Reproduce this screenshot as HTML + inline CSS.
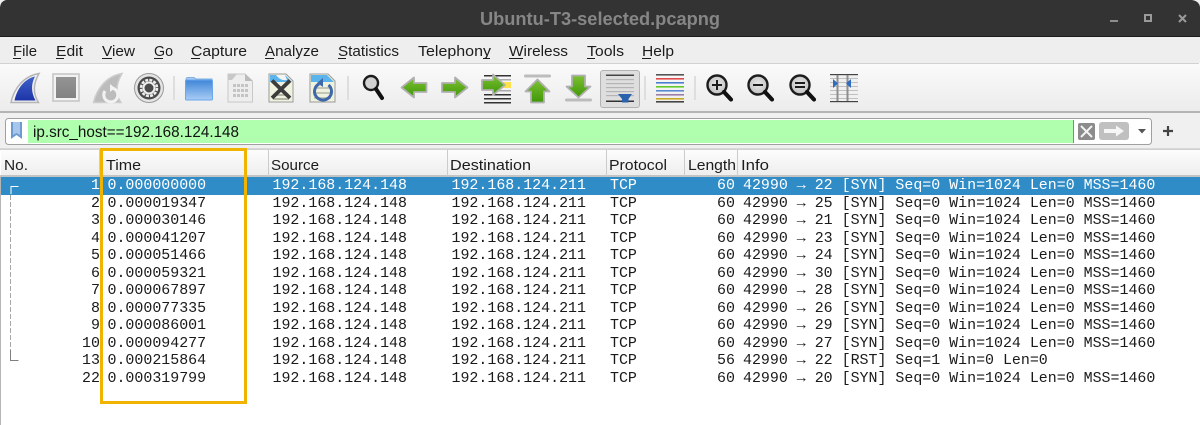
<!DOCTYPE html>
<html><head><meta charset="utf-8"><title>Ubuntu-T3-selected.pcapng</title>
<style>
html,body{margin:0;padding:0;width:1200px;height:425px;overflow:hidden;background:#fff}
svg{display:block}
.ui{font-family:"Liberation Sans",sans-serif;font-size:15px;fill:#1c1c1c}
.m{font-family:"Liberation Mono",monospace;font-size:14.95px;fill:#1a1a1a;white-space:pre}
.w{fill:#fff}
</style></head><body>
<svg width="1200" height="425" viewBox="0 0 1200 425" xmlns="http://www.w3.org/2000/svg">
<defs>
<linearGradient id="tb" x1="0" y1="0" x2="0" y2="1"><stop offset="0" stop-color="#fafafa"/><stop offset="1" stop-color="#ececec"/></linearGradient>
<linearGradient id="hd" x1="0" y1="0" x2="0" y2="1"><stop offset="0" stop-color="#fdfdfd"/><stop offset="1" stop-color="#ededed"/></linearGradient>
<linearGradient id="fin" x1="0" y1="0" x2="0" y2="1"><stop offset="0" stop-color="#3f62c8"/><stop offset="1" stop-color="#1e34a8"/></linearGradient>
<linearGradient id="gr" x1="0" y1="0" x2="0" y2="1"><stop offset="0" stop-color="#7cc232"/><stop offset="1" stop-color="#3f9608"/></linearGradient>
<linearGradient id="fo" x1="0" y1="0" x2="0" y2="1"><stop offset="0" stop-color="#3f86d8"/><stop offset="1" stop-color="#a9cdf5"/></linearGradient>
<linearGradient id="st" x1="0" y1="0" x2="0" y2="1"><stop offset="0" stop-color="#949494"/><stop offset="1" stop-color="#828282"/></linearGradient>
<radialGradient id="gl" cx=".5" cy=".45" r=".6"><stop offset="0" stop-color="#e8e8e8"/><stop offset="1" stop-color="#bcbcbc"/></radialGradient>
</defs>

<!-- title bar -->
<rect width="1200" height="425" fill="#fff"/>
<rect x="0" y="0" width="1200" height="36" fill="#333"/>
<path d="M0 0H6Q1 1 0 7Z M1200 0H1192Q1199 1 1200 7Z" fill="#f0f0f0"/>
<rect x="0" y="36" width="1200" height="1" fill="#1c1c1c"/>
<text x="480" y="25" font-family="'Liberation Sans',sans-serif" font-size="18.500" font-weight="700" fill="#868686" textLength="240" lengthAdjust="spacingAndGlyphs">Ubuntu-T3-selected.pcapng</text>
<rect x="1110" y="20" width="8" height="2" fill="#8e8e8e"/>
<rect x="1145" y="15" width="6" height="6" fill="none" stroke="#9a9a9a" stroke-width="2"/>
<path d="M1179 15L1186 22M1186 15L1179 22" stroke="#9a9a9a" stroke-width="2"/>

<!-- menu -->
<rect x="0" y="37" width="1200" height="26" fill="#eeeeee"/>
<rect x="0" y="63" width="1199" height="1" fill="#d2d2d2"/>
<g class="ui">
<text x="13" y="56" textLength="24" lengthAdjust="spacingAndGlyphs">File</text>
<text x="56" y="56" textLength="27" lengthAdjust="spacingAndGlyphs">Edit</text>
<text x="102" y="56" textLength="33" lengthAdjust="spacingAndGlyphs">View</text>
<text x="154" y="56" textLength="19" lengthAdjust="spacingAndGlyphs">Go</text>
<text x="191" y="56" textLength="56" lengthAdjust="spacingAndGlyphs">Capture</text>
<text x="265" y="56" textLength="54" lengthAdjust="spacingAndGlyphs">Analyze</text>
<text x="338" y="56" textLength="61" lengthAdjust="spacingAndGlyphs">Statistics</text>
<text x="418" y="56" textLength="73" lengthAdjust="spacingAndGlyphs">Telephony</text>
<text x="509" y="56" textLength="59" lengthAdjust="spacingAndGlyphs">Wireless</text>
<text x="587" y="56" textLength="37" lengthAdjust="spacingAndGlyphs">Tools</text>
<text x="642" y="56" textLength="32" lengthAdjust="spacingAndGlyphs">Help</text>
</g>
<g fill="#1c1c1c">
<rect x="13" y="58" width="8" height="1"/><rect x="56" y="58" width="8" height="1"/><rect x="102" y="58" width="10" height="1"/><rect x="154" y="58" width="9" height="1"/><rect x="191" y="58" width="9" height="1"/><rect x="265" y="58" width="9" height="1"/><rect x="338" y="58" width="8" height="1"/><rect x="483" y="58" width="7" height="1"/><rect x="509" y="58" width="14" height="1"/><rect x="587" y="58" width="8" height="1"/><rect x="642" y="58" width="9" height="1"/>
</g>

<!-- toolbar -->
<rect x="0" y="64" width="1200" height="47" fill="url(#tb)"/>
<rect x="0" y="111" width="1200" height="2" fill="#b4b4b4"/>

<!-- shark fin -->
<path d="M39 73.500C24 76 14 88 11 102.500H38.500C33 94 33 84 39 73.500Z" fill="#f2f2f2" stroke="#b5b5b5" stroke-width="1.500"/>
<path d="M35 76.500C24 79 17 89 14.500 100.500H35.500C31 92 31 84 35 76.500Z" fill="url(#fin)"/>
<!-- stop -->
<rect x="53" y="74" width="26" height="27" fill="#f2f2f2" stroke="#c4c4c4" stroke-width="1.500"/>
<rect x="56" y="77" width="20" height="21" fill="url(#st)"/>
<!-- restart -->
<path d="M122 73.500C107 76 97 88 93.500 102.500H121C115 94 116 84 122 73.500Z" fill="#bcbcbc" stroke="#cdcdcd" stroke-width="1.500"/>
<path d="M105 91a7 7 0 1 0 7-3" fill="none" stroke="#f2f2f2" stroke-width="3"/>
<path d="M110 84l5 4-5 4z" fill="#f2f2f2"/>
<!-- gear -->
<circle cx="149" cy="88" r="14.500" fill="#e4e4e4" stroke="#9a9a9a" stroke-width="1"/>
<circle cx="149" cy="88" r="11.500" fill="#4a4a4a"/>
<circle cx="149" cy="88" r="8" fill="none" stroke="#eee" stroke-width="2.500" stroke-dasharray="3 1.200"/>
<circle cx="149" cy="88" r="5.500" fill="none" stroke="#eee" stroke-width="2"/>
<circle cx="149" cy="88" r="3.500" fill="#4a4a4a"/>
<!-- sep -->
<rect x="173" y="76" width="2" height="24" fill="#dedede"/>
<!-- folder -->
<path d="M186 79l1-1.500h7l2 1.500h16v3h-26z" fill="#a8cbee" stroke="#7fb0e4" stroke-width="1"/>
<rect x="185.500" y="80" width="27" height="20" rx="1" fill="url(#fo)" stroke="#6aa6ea" stroke-width="1"/>
<!-- file -->
<path d="M228 74H245L252.500 81V102H228Z" fill="#eeeeee" stroke="#c8c8c8"/>
<path d="M245 74V81H252.500Z" fill="#bbb"/>
<path d="M228 74H237L232 80H228Z" fill="#c8c8c8"/>
<g fill="#c4c4c4"><rect x="233" y="84" width="15" height="3"/><rect x="233" y="89" width="15" height="3"/><rect x="233" y="94" width="15" height="3"/></g>
<g fill="#eee"><rect x="236" y="83" width="1" height="14"/><rect x="240" y="83" width="1" height="14"/><rect x="244" y="83" width="1" height="14"/></g>
<!-- close file -->
<path d="M269 74H286L293 81V102H269Z" fill="#f0f2e0" stroke="#9a9a9a"/>
<path d="M270 75H285L292 82H270Z" fill="#5cb4ec"/>
<path d="M276 75Q280 81 287 80L285 75Z" fill="#f4f4f4"/>
<g fill="#b5b5a5"><rect x="273" y="94" width="16" height="2"/><rect x="273" y="98" width="16" height="2"/></g>
<path d="M272 80.500L290 98M290 80.500L272 98" stroke="#3c3c3c" stroke-width="3.800"/>
<!-- reload file -->
<path d="M310 74H328L335 81V102H310Z" fill="#f0f2e0" stroke="#9a9a9a"/>
<path d="M311 75H327L334 82H311Z" fill="#5cb4ec"/>
<g fill="#c5c5b5"><rect x="314" y="87" width="17" height="2"/><rect x="314" y="92" width="17" height="2"/><rect x="314" y="97" width="17" height="2"/></g>
<path d="M319 84a8.500 8.500 0 1 0 9.500 1" fill="none" stroke="#3f68a8" stroke-width="3"/>
<path d="M323 78l-6 5 6 4z" fill="#3f68a8"/>
<rect x="347" y="76" width="2" height="24" fill="#dedede"/>
<!-- find -->
<circle cx="371" cy="83" r="7" fill="#d2d2d2" stroke="#1c1c1c" stroke-width="2.400"/>
<path d="M376 89L382 98" stroke="#111" stroke-width="4" stroke-linecap="round"/>
<!-- back -->
<path d="M401.500 87.500L414 77.500V83H426.500V92H414V97.500Z" fill="url(#gr)" stroke="#b0b0b0" stroke-width="1.800" stroke-linejoin="round"/>
<!-- forward -->
<path d="M467.500 87.500L455 77.500V83H442V92H455V97.500Z" fill="url(#gr)" stroke="#b0b0b0" stroke-width="1.800" stroke-linejoin="round"/>
<!-- go to packet -->
<g fill="#333"><rect x="484" y="75" width="27" height="1.500"/><rect x="484" y="94" width="27" height="1.500"/><rect x="484" y="98" width="27" height="1.500"/><rect x="484" y="102" width="27" height="1.500"/></g>
<g fill="#aaa"><rect x="495" y="79" width="16" height="1.500"/><rect x="495" y="90" width="16" height="1.500"/></g>
<rect x="495" y="82" width="16" height="6" fill="#ffe14a"/>
<path d="M482 80H493V74.500L505 85L493 95V90H482Z" fill="url(#gr)" stroke="#b0b0b0" stroke-width="1.800" stroke-linejoin="round"/>
<!-- top -->
<rect x="524" y="74.500" width="27" height="3" rx="1.500" fill="#bcbcbc"/>
<path d="M537.500 79.500L549.500 91.500H544V102.500H531V91.500H525.500Z" fill="url(#gr)" stroke="#b0b0b0" stroke-width="1.800" stroke-linejoin="round"/>
<!-- bottom -->
<path d="M572 75.500H585V86.500H590.500L578.500 97.500L566.500 86.500H572Z" fill="url(#gr)" stroke="#b0b0b0" stroke-width="1.800" stroke-linejoin="round"/>
<rect x="565" y="98.500" width="27" height="3" rx="1.500" fill="#bcbcbc"/>
<!-- autoscroll -->
<rect x="600.500" y="70.500" width="39" height="37" rx="2.500" fill="#dedede" stroke="#b2b2b2"/>
<rect x="606" y="74.500" width="28" height="1.500" fill="#444"/>
<g fill="#b4b4b4"><rect x="606" y="79" width="28" height="1.200"/><rect x="606" y="83" width="28" height="1.200"/><rect x="606" y="87" width="28" height="1.200"/><rect x="606" y="91" width="28" height="1.200"/><rect x="606" y="95" width="28" height="1.200"/></g>
<rect x="606" y="100.500" width="28" height="1.500" fill="#333"/>
<path d="M618 94H632L628.500 99V102.500H622V99Z" fill="#2a62ad"/>
<rect x="644" y="76" width="2" height="24" fill="#dedede"/>
<!-- colorize -->
<rect x="656" y="74" width="28" height="1.600" fill="#555"/><rect x="656" y="78" width="28" height="1.600" fill="#e24b4b"/><rect x="656" y="82" width="28" height="1.600" fill="#4a7fcf"/><rect x="656" y="86" width="28" height="1.600" fill="#62c92a"/><rect x="656" y="90" width="28" height="1.600" fill="#5c8ad0"/><rect x="656" y="94" width="28" height="1.600" fill="#9a7ea8"/><rect x="656" y="98" width="28" height="1.600" fill="#c8a820"/><rect x="656" y="101" width="28" height="1.600" fill="#444"/>
<rect x="694" y="76" width="2" height="24" fill="#dedede"/>
<!-- zoom in -->
<g>
<circle cx="717" cy="85" r="9.500" fill="url(#gl)" stroke="#1c1c1c" stroke-width="2.400"/><path d="M724 92L731 99.500" stroke="#111" stroke-width="4.200" stroke-linecap="round"/><path d="M712 85H722M717 80V90" stroke="#1c1c1c" stroke-width="2"/>
<circle cx="758" cy="85" r="9.500" fill="url(#gl)" stroke="#1c1c1c" stroke-width="2.400"/><path d="M765 92L772 99.500" stroke="#111" stroke-width="4.200" stroke-linecap="round"/><path d="M753 85H763" stroke="#1c1c1c" stroke-width="2"/>
<circle cx="800" cy="85" r="9.500" fill="url(#gl)" stroke="#1c1c1c" stroke-width="2.400"/><path d="M807 92L814 99.500" stroke="#111" stroke-width="4.200" stroke-linecap="round"/><path d="M795 83H805M795 87H805" stroke="#1c1c1c" stroke-width="2"/>
</g>
<!-- resize -->
<rect x="830" y="74" width="28" height="28" fill="#f0f0f0"/>
<g fill="#c0c0c0"><rect x="830" y="78" width="28" height="1"/><rect x="830" y="82" width="28" height="1"/><rect x="830" y="86" width="28" height="1"/><rect x="830" y="90" width="28" height="1"/><rect x="830" y="94" width="28" height="1"/><rect x="830" y="98" width="28" height="1"/></g>
<rect x="830" y="74" width="28" height="1.200" fill="#444"/><rect x="830" y="101" width="28" height="1.200" fill="#444"/>
<rect x="836.500" y="75" width="2" height="26" fill="#8e8e8e"/><rect x="846.500" y="75" width="2" height="26" fill="#8e8e8e"/>
<path d="M833 79L838 83.500L833 88Z M851 79L846 83.500L851 88Z" fill="#2f6cc0"/>

<!-- filter -->
<rect x="0" y="113" width="1200" height="35" fill="#f0f0f0"/>
<rect x="5.500" y="118.500" width="1146" height="26" rx="3" fill="#fff" stroke="#a0a0a0"/>
<rect x="28" y="120" width="1045" height="23" fill="#afffaf"/>
<rect x="1073" y="120" width="1" height="23" fill="#888"/>
<path d="M11 122H22V139L16.500 135L11 139Z" fill="#6c9bd2"/>
<path d="M13 122H20V135L16.500 133L13 135Z" fill="#a7c6ea"/>
<text x="33" y="137" font-family="'Liberation Sans',sans-serif" font-size="15.500" fill="#111" textLength="206" lengthAdjust="spacingAndGlyphs">ip.src_host==192.168.124.148</text>
<rect x="1078" y="123" width="17" height="17" rx="2" fill="#8c8c8c"/>
<path d="M1081 126L1092 137M1092 126L1081 137" stroke="#f4f4f4" stroke-width="2"/>
<rect x="1099" y="122" width="30" height="18" rx="3" fill="#c0c0c0"/>
<path d="M1104 129H1116V125.500L1124 131L1116 136.500V133H1104Z" fill="#f6f6f6"/>
<path d="M1138 129H1146L1142 133.500Z" fill="#555"/>
<path d="M1163 131H1173M1168 126V136" stroke="#444" stroke-width="2.200"/>
<rect x="0" y="148" width="1200" height="1" fill="#d8d8d8"/>

<!-- header -->
<rect x="1" y="150" width="1199" height="26" fill="url(#hd)"/>
<rect x="0" y="149" width="1200" height="1" fill="#d0d0d0"/>
<rect x="0" y="175" width="1200" height="2" fill="#c4c4c4"/>
<g fill="#cccccc"><rect x="99" y="150" width="1" height="26"/><rect x="268" y="150" width="1" height="26"/><rect x="447" y="150" width="1" height="26"/><rect x="606" y="150" width="1" height="26"/><rect x="684" y="150" width="1" height="26"/><rect x="737" y="150" width="1" height="26"/></g>
<g class="ui">
<text x="4" y="170" textLength="24" lengthAdjust="spacingAndGlyphs">No.</text>
<text x="106" y="170" textLength="35" lengthAdjust="spacingAndGlyphs">Time</text>
<text x="271" y="170" textLength="48" lengthAdjust="spacingAndGlyphs">Source</text>
<text x="450" y="170" textLength="81" lengthAdjust="spacingAndGlyphs">Destination</text>
<text x="609" y="170" textLength="58" lengthAdjust="spacingAndGlyphs">Protocol</text>
<text x="688" y="170" textLength="48" lengthAdjust="spacingAndGlyphs">Length</text>
<text x="741" y="170" textLength="28" lengthAdjust="spacingAndGlyphs">Info</text>
</g>

<!-- rows -->
<rect x="1" y="177" width="1199" height="18" fill="#308cc6"/>
<rect x="0" y="177" width="1" height="248" fill="#b5b5b5"/>
<g class="m w">
<text x="91" y="189">1</text><text x="107.500" y="189">0.000000000</text><text x="272.500" y="189">192.168.124.148</text><text x="451.500" y="189">192.168.124.211</text><text x="610" y="189">TCP</text><text x="717" y="189">60</text><text x="743" y="189">42990 → 22 [SYN] Seq=0 Win=1024 Len=0 MSS=1460</text>
</g>
<g class="m">
<text x="91" y="207">2</text><text x="107.500" y="207">0.000019347</text><text x="272.500" y="207">192.168.124.148</text><text x="451.500" y="207">192.168.124.211</text><text x="610" y="207">TCP</text><text x="717" y="207">60</text><text x="743" y="207">42990 → 25 [SYN] Seq=0 Win=1024 Len=0 MSS=1460</text>
<text x="91" y="224">3</text><text x="107.500" y="224">0.000030146</text><text x="272.500" y="224">192.168.124.148</text><text x="451.500" y="224">192.168.124.211</text><text x="610" y="224">TCP</text><text x="717" y="224">60</text><text x="743" y="224">42990 → 21 [SYN] Seq=0 Win=1024 Len=0 MSS=1460</text>
<text x="91" y="242">4</text><text x="107.500" y="242">0.000041207</text><text x="272.500" y="242">192.168.124.148</text><text x="451.500" y="242">192.168.124.211</text><text x="610" y="242">TCP</text><text x="717" y="242">60</text><text x="743" y="242">42990 → 23 [SYN] Seq=0 Win=1024 Len=0 MSS=1460</text>
<text x="91" y="259">5</text><text x="107.500" y="259">0.000051466</text><text x="272.500" y="259">192.168.124.148</text><text x="451.500" y="259">192.168.124.211</text><text x="610" y="259">TCP</text><text x="717" y="259">60</text><text x="743" y="259">42990 → 24 [SYN] Seq=0 Win=1024 Len=0 MSS=1460</text>
<text x="91" y="277">6</text><text x="107.500" y="277">0.000059321</text><text x="272.500" y="277">192.168.124.148</text><text x="451.500" y="277">192.168.124.211</text><text x="610" y="277">TCP</text><text x="717" y="277">60</text><text x="743" y="277">42990 → 30 [SYN] Seq=0 Win=1024 Len=0 MSS=1460</text>
<text x="91" y="294">7</text><text x="107.500" y="294">0.000067897</text><text x="272.500" y="294">192.168.124.148</text><text x="451.500" y="294">192.168.124.211</text><text x="610" y="294">TCP</text><text x="717" y="294">60</text><text x="743" y="294">42990 → 28 [SYN] Seq=0 Win=1024 Len=0 MSS=1460</text>
<text x="91" y="312">8</text><text x="107.500" y="312">0.000077335</text><text x="272.500" y="312">192.168.124.148</text><text x="451.500" y="312">192.168.124.211</text><text x="610" y="312">TCP</text><text x="717" y="312">60</text><text x="743" y="312">42990 → 26 [SYN] Seq=0 Win=1024 Len=0 MSS=1460</text>
<text x="91" y="329">9</text><text x="107.500" y="329">0.000086001</text><text x="272.500" y="329">192.168.124.148</text><text x="451.500" y="329">192.168.124.211</text><text x="610" y="329">TCP</text><text x="717" y="329">60</text><text x="743" y="329">42990 → 29 [SYN] Seq=0 Win=1024 Len=0 MSS=1460</text>
<text x="82" y="347">10</text><text x="107.500" y="347">0.000094277</text><text x="272.500" y="347">192.168.124.148</text><text x="451.500" y="347">192.168.124.211</text><text x="610" y="347">TCP</text><text x="717" y="347">60</text><text x="743" y="347">42990 → 27 [SYN] Seq=0 Win=1024 Len=0 MSS=1460</text>
<text x="82" y="364">13</text><text x="107.500" y="364">0.000215864</text><text x="272.500" y="364">192.168.124.148</text><text x="451.500" y="364">192.168.124.211</text><text x="610" y="364">TCP</text><text x="717" y="364">56</text><text x="743" y="364">42990 → 22 [RST] Seq=1 Win=0 Len=0</text>
<text x="82" y="382">22</text><text x="107.500" y="382">0.000319799</text><text x="272.500" y="382">192.168.124.148</text><text x="451.500" y="382">192.168.124.211</text><text x="610" y="382">TCP</text><text x="717" y="382">60</text><text x="743" y="382">42990 → 20 [SYN] Seq=0 Win=1024 Len=0 MSS=1460</text>
</g>

<!-- related packet tree -->
<path d="M18.500 186.500H11V194" fill="none" stroke="#fff" stroke-width="1"/>
<path d="M10.500 195V350" fill="none" stroke="#a8a8a8" stroke-width="1" stroke-dasharray="5 2"/>
<path d="M10.500 350V360.500H18.500" fill="none" stroke="#808080" stroke-width="1"/>

<!-- highlight box -->
<rect x="101.500" y="149.500" width="144" height="253" fill="none" stroke="#f0b400" stroke-width="3"/>
</svg>
</body></html>
